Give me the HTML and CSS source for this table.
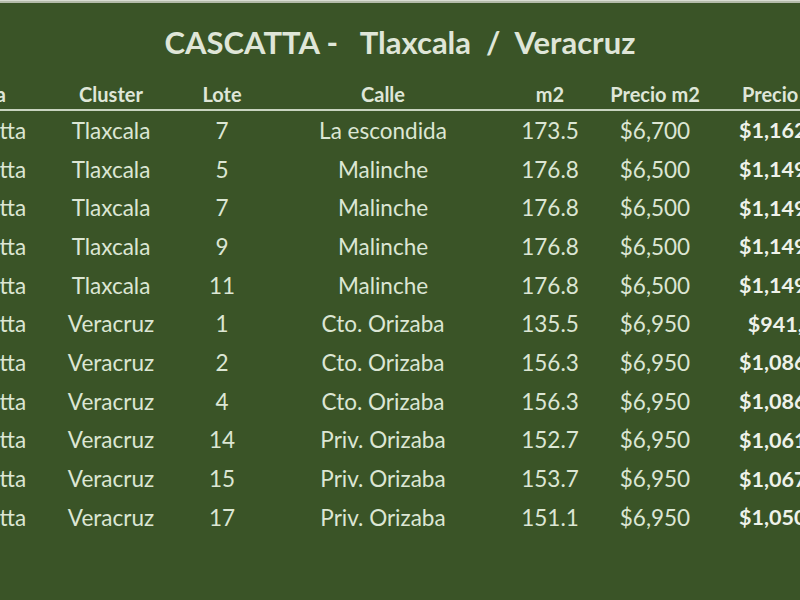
FILE: index.html
```html
<!DOCTYPE html>
<html lang="es">
<head>
<meta charset="utf-8">
<title>CASCATTA - Tlaxcala / Veracruz</title>
<link rel="stylesheet" href="styles.css">
</head>
<body>
<div class="sheet">
  <div class="topline"></div>
  <h1 class="title">CASCATTA -   Tlaxcala  /  Veracruz</h1>
  <div class="table">
    <div class="row head">
      <div class="cell first-head">Privada</div>
      <div class="cell">Cluster</div>
      <div class="cell">Lote</div>
      <div class="cell">Calle</div>
      <div class="cell">m2</div>
      <div class="cell">Precio m2</div>
      <div class="cell">Precio Total</div>
    </div>
    <div class="row"><div class="cell">Cascatta</div><div class="cell">Tlaxcala</div><div class="cell">7</div><div class="cell">La escondida</div><div class="cell">173.5</div><div class="cell">$6,700</div><div class="cell total">$1,162,450</div></div>
    <div class="row"><div class="cell">Cascatta</div><div class="cell">Tlaxcala</div><div class="cell">5</div><div class="cell">Malinche</div><div class="cell">176.8</div><div class="cell">$6,500</div><div class="cell total">$1,149,200</div></div>
    <div class="row"><div class="cell">Cascatta</div><div class="cell">Tlaxcala</div><div class="cell">7</div><div class="cell">Malinche</div><div class="cell">176.8</div><div class="cell">$6,500</div><div class="cell total">$1,149,200</div></div>
    <div class="row"><div class="cell">Cascatta</div><div class="cell">Tlaxcala</div><div class="cell">9</div><div class="cell">Malinche</div><div class="cell">176.8</div><div class="cell">$6,500</div><div class="cell total">$1,149,200</div></div>
    <div class="row"><div class="cell">Cascatta</div><div class="cell">Tlaxcala</div><div class="cell">11</div><div class="cell">Malinche</div><div class="cell">176.8</div><div class="cell">$6,500</div><div class="cell total">$1,149,200</div></div>
    <div class="row"><div class="cell">Cascatta</div><div class="cell">Veracruz</div><div class="cell">1</div><div class="cell">Cto. Orizaba</div><div class="cell">135.5</div><div class="cell">$6,950</div><div class="cell total">$941,725</div></div>
    <div class="row"><div class="cell">Cascatta</div><div class="cell">Veracruz</div><div class="cell">2</div><div class="cell">Cto. Orizaba</div><div class="cell">156.3</div><div class="cell">$6,950</div><div class="cell total">$1,086,285</div></div>
    <div class="row"><div class="cell">Cascatta</div><div class="cell">Veracruz</div><div class="cell">4</div><div class="cell">Cto. Orizaba</div><div class="cell">156.3</div><div class="cell">$6,950</div><div class="cell total">$1,086,285</div></div>
    <div class="row"><div class="cell">Cascatta</div><div class="cell">Veracruz</div><div class="cell">14</div><div class="cell">Priv. Orizaba</div><div class="cell">152.7</div><div class="cell">$6,950</div><div class="cell total">$1,061,265</div></div>
    <div class="row"><div class="cell">Cascatta</div><div class="cell">Veracruz</div><div class="cell">15</div><div class="cell">Priv. Orizaba</div><div class="cell">153.7</div><div class="cell">$6,950</div><div class="cell total">$1,067,937</div></div>
    <div class="row"><div class="cell">Cascatta</div><div class="cell">Veracruz</div><div class="cell">17</div><div class="cell">Priv. Orizaba</div><div class="cell">151.1</div><div class="cell">$6,950</div><div class="cell total">$1,050,145</div></div>
  </div>
</div>
</body>
</html>
```
FILE: styles.css
```css
html, body {
  margin: 0;
  padding: 0;
  background: #3a5427;
  overflow: hidden;
}
.sheet {
  width: 800px;
  height: 600px;
  overflow: hidden;
  background: #3a5427;
  font-family: Lato, "Open Sans", sans-serif;
  color: #dce6d4;
}
.topline {
  height: 2px;
  background: #b4bcaa;
  border-top: 1px solid #d8dcd2;
}
.title {
  margin: 19px 0 0 0;
  height: 40px;
  line-height: 40px;
  text-align: center;
  white-space: pre;
  font-size: 31px;
  font-weight: 700;
  color: #dfe6d8;
}
.table {
  margin-left: -72px;
  width: 946px;
  margin-top: 17px;
}
.row {
  display: grid;
  grid-template-columns: 112px 142px 80px 242px 92px 118px 160px;
  height: 38.7px;
  align-items: center;
}
.cell {
  text-align: center;
  white-space: nowrap;
  font-size: 22.5px;
}
.row.head {
  height: 30px;
  border-bottom: 2px solid #c8d4c0;
}
.row.head .cell {
  font-weight: 700;
  font-size: 20px;
  color: #dfe6d8;
}
.row.head .first-head {
  text-align: right;
  padding-right: 34px;
}
.cell.total {
  font-weight: 700;
  font-size: 21.5px;
  color: #eef2ea;
}
```
